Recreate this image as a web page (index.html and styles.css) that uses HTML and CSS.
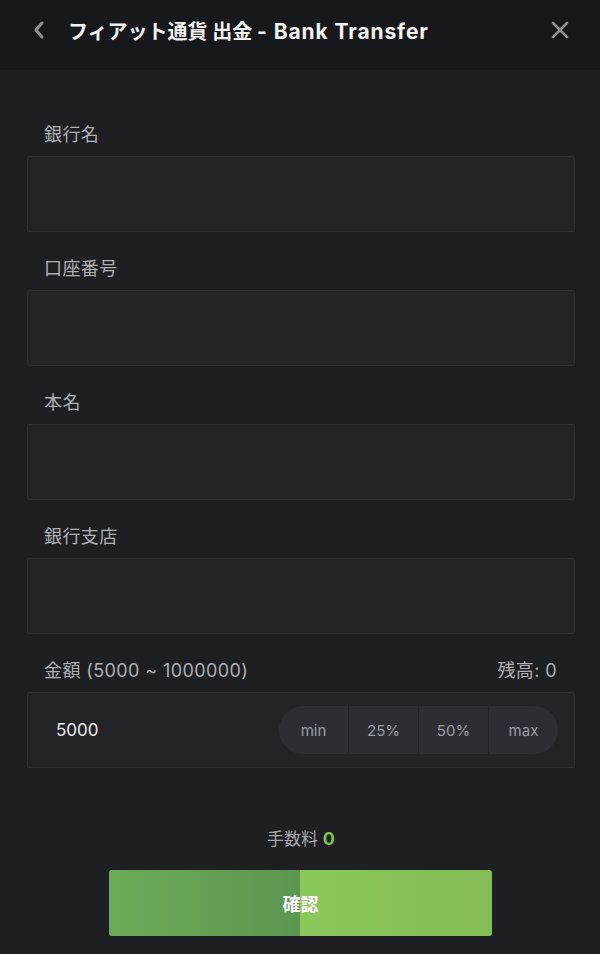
FILE: index.html
```html
<!DOCTYPE html>
<html lang="ja">
<head>
    <meta charset="UTF-8">
    <meta name="viewport" content="width=device-width, initial-scale=1.0">
    <title>フィアット通貨 出金 - Bank Transfer</title>
    <link rel="stylesheet" href="styles.css">
</head>
<body>
    <div class="header">
        <svg class="back" width="14" height="20" viewBox="0 0 14 20">
            <path d="M10 3 L4 10 L10 17" fill="none" stroke="#8c8e92" stroke-width="3" stroke-linecap="round" stroke-linejoin="round"/>
        </svg>
        <h1 class="title">フィアット通貨 出金 <span class="title-en">- Bank Transfer</span></h1>
        <svg class="close" width="20" height="20" viewBox="0 0 20 20">
            <path d="M3 3 L17 17 M17 3 L3 17" fill="none" stroke="#8c8e92" stroke-width="2.6" stroke-linecap="round"/>
        </svg>
    </div>

    <form class="form">
        <div class="field">
            <label class="label">銀行名</label>
            <input type="text" class="input">
        </div>
        <div class="field">
            <label class="label">口座番号</label>
            <input type="text" class="input">
        </div>
        <div class="field">
            <label class="label">本名</label>
            <input type="text" class="input">
        </div>
        <div class="field">
            <label class="label">銀行支店</label>
            <input type="text" class="input">
        </div>
        <div class="field">
            <div class="label label-row">
                <span>金額 (5000 ~ 1000000)</span>
                <span>残高: 0</span>
            </div>
            <div class="amount-box">
                <span class="amount-value">5000</span>
                <div class="quick">
                    <span class="quick-item">min</span>
                    <span class="quick-item">25%</span>
                    <span class="quick-item">50%</span>
                    <span class="quick-item">max</span>
                </div>
            </div>
        </div>

        <div class="fee">手数料 <span class="fee-value">0</span></div>
        <button type="button" class="confirm">確認</button>
    </form>
</body>
</html>
```

FILE: styles.css
```css
body, html {
    margin: 0;
    padding: 0;
    background-color: #1e1f23;
    font-family: Inter, "Noto Sans CJK JP", sans-serif;
    color: #aeb0b4;
}
.header {
    height: 70px;
    background-color: #17181b;
    display: flex;
    align-items: center;
    padding: 0 30px 10px 32px;
    box-sizing: border-box;
}
.back {
    flex-shrink: 0;
}
.title {
    margin: 0 0 0 22px;
    flex: 1;
    font-size: 20px;
    font-weight: bold;
    color: #f2f2f2;
}
.title-en {
    font-size: 21px;
    letter-spacing: 0.9px;
}
.form {
    padding: 28px 25px 0 27px;
    display: flex;
    flex-direction: column;
}
.field {
    display: flex;
    flex-direction: column;
}
.label {
    height: 58px;
    box-sizing: border-box;
    display: flex;
    align-items: flex-end;
    padding: 0 18px 10px 17px;
    font-size: 18px;
    line-height: 22px;
    letter-spacing: 0.4px;
    color: #aeb0b4;
}
.label-row {
    justify-content: space-between;
}
.input {
    height: 76px;
    box-sizing: border-box;
    margin: 0;
    background-color: #232428;
    border: 1px solid #2c2d31;
    border-radius: 2px;
    outline: none;
}
.amount-box {
    height: 76px;
    box-sizing: border-box;
    background-color: #232428;
    border: 1px solid #2c2d31;
    border-radius: 2px;
    display: flex;
    align-items: center;
    justify-content: space-between;
    padding: 0 16px 0 28px;
}
.amount-value {
    font-size: 17px;
    color: #eeeeee;
}
.quick {
    display: flex;
    height: 48px;
    border-radius: 24px;
    overflow: hidden;
    background-color: #2c2e33;
}
.quick-item {
    width: 69px;
    display: flex;
    align-items: center;
    justify-content: center;
    font-size: 15px;
    color: #9a9ca1;
    border-left: 1px solid #232428;
}
.quick-item:first-child {
    border-left: none;
}
.fee {
    margin-top: 60px;
    text-align: center;
    font-size: 17px;
    line-height: 22px;
    color: #a6a8ac;
}
.fee-value {
    color: #7ec04f;
    font-weight: bold;
    font-size: 18px;
}
.confirm {
    margin: 20px 0 0 82px;
    width: 383px;
    height: 66px;
    border: none;
    border-radius: 3px;
    background: linear-gradient(90deg, #6bab56 0%, #5c9752 50%, #8bc85a 50%, #84bb55 100%);
    color: #ffffff;
    font-family: "Noto Sans CJK JP", sans-serif;
    font-size: 18px;
    font-weight: bold;
    cursor: pointer;
}
```
